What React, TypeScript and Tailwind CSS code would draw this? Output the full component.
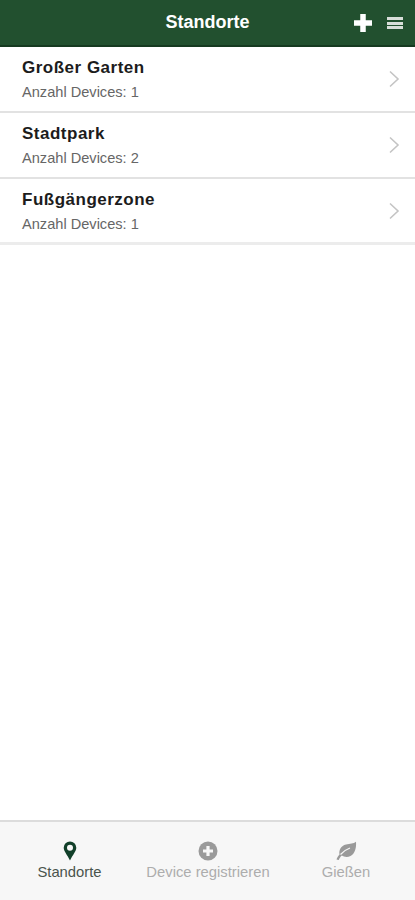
const locations = [
  { name: "Großer Garten", count: 1, border: "border-b-2 border-[#e2e2e2]" },
  { name: "Stadtpark", count: 2, border: "border-b-2 border-[#e2e2e2]" },
  { name: "Fußgängerzone", count: 1, border: "border-b-[3px] border-[#ececec] pt-[1px]" },
];

function Chevron() {
  return (
    <svg width="12" height="18" viewBox="0 0 12 18" fill="none" stroke="#c4c4c4" strokeWidth="1.6">
      <path d="M2 1.5 L10 9 L2 16.5" />
    </svg>
  );
}

function PinIcon() {
  return (
    <svg width="14" height="20" viewBox="0 0 14 20">
      <path
        fillRule="evenodd"
        fill="#12402a"
        d="M7 0.5a6.3 6.3 0 0 1 6.3 6.3c0 3.6-3.6 7-6.3 12.7C4.300 13.800 0.700 10.400 0.700 6.800A6.300 6.300 0 0 1 7 0.500zM7 3.800a3 3 0 1 0 0 6 3 3 0 0 0 0-6z"
      />
    </svg>
  );
}

function PlusCircleIcon() {
  return (
    <svg width="20" height="20" viewBox="0 0 20 20">
      <circle cx="10" cy="10" r="9.500" fill="#9a9a9a" />
      <path d="M10 5v10M5 10h10" stroke="#f7f7f7" strokeWidth="3.200" />
    </svg>
  );
}

function LeafIcon() {
  return (
    <svg width="22" height="20" viewBox="0 0 22 20">
      <path
        fill="#9a9a9a"
        d="M21 0.800c0.500 6-1 12-5.500 14.200-3 1.500-6.500 1-8.700-0.500-1.200 1-2.300 2.500-3 4.500L1.500 18.500c0.500-1.800 1.500-3.500 3-5C3.700 9 6 4.800 11 3.500c4-1 7.500-0.700 10-2.700z"
      />
      <path d="M5.500 13.500C8 10.500 11 8.500 15 7" stroke="#f7f7f7" strokeWidth="1.200" fill="none" />
    </svg>
  );
}

export default function App() {
  return (
    <div className="flex h-[900px] flex-col bg-white font-['Liberation_Sans',Arial,sans-serif]">
      <header className="relative flex h-[47px] shrink-0 items-center justify-center border-b-2 border-[#163a20] bg-[#22502f] pb-[1px]">
        <h1 className="text-lg font-bold text-white">Standorte</h1>
        <div className="absolute right-[12px] top-[14px] flex items-center gap-[15px]">
          <svg width="18" height="18" viewBox="0 0 18 18">
            <path d="M9 0v18M0 9h18" stroke="#ffffff" strokeWidth="5.500" />
          </svg>
          <div className="flex w-4 flex-col gap-[1.500px]">
            <div className="h-[3px] bg-[#d8ded9]" />
            <div className="h-[3px] bg-[#d8ded9]" />
            <div className="h-[3px] bg-[#d8ded9]" />
          </div>
        </div>
      </header>

      <main className="flex-1">
        {locations.map((loc) => (
          <div
            key={loc.name}
            className={`flex h-[66px] items-center justify-between pl-[22px] pr-[15px] ${loc.border}`}
          >
            <div>
              <div className="text-[17px] font-bold leading-[20px] tracking-[0.5px] text-[#1c1c1c]">{loc.name}</div>
              <div className="mt-[5px] text-[14.600px] leading-[18px] text-[#666666]">Anzahl Devices: {loc.count}</div>
            </div>
            <Chevron />
          </div>
        ))}
      </main>

      <nav className="flex h-[80px] shrink-0 border-t-2 border-[#dcdcdc] bg-[#f7f7f7] pt-[19px]">
        <div className="flex w-[139px] flex-col items-center">
          <PinIcon />
          <span className="mt-[1px] text-[14.800px] leading-[20px] text-[#4a544d]">Standorte</span>
        </div>
        <div className="flex w-[138px] flex-col items-center">
          <PlusCircleIcon />
          <span className="mt-[1px] text-[14.800px] leading-[20px] text-[#adadad]">Device registrieren</span>
        </div>
        <div className="flex w-[138px] flex-col items-center">
          <LeafIcon />
          <span className="mt-[1px] text-[14.800px] leading-[20px] text-[#adadad]">Gießen</span>
        </div>
      </nav>
    </div>
  );
}
